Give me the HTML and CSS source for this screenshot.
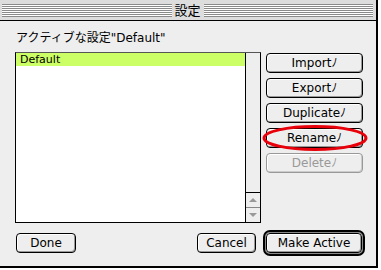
FILE: index.html
```html
<!DOCTYPE html>
<html lang="ja">
<head>
  <meta charset="UTF-8">
  <title>設定</title>
  <link rel="stylesheet" href="styles.css">
</head>
<body>
  <div class="window">
    <div class="titlebar">
      <div class="stripes"></div>
      <span class="title">設定</span>
      <div class="stripes"></div>
    </div>

    <div class="content">
      <div class="label">アクティブな設定"Default"</div>

      <div class="main">
        <div class="list">
          <div class="items">
            <div class="item selected">Default</div>
          </div>
          <div class="scrollbar">
            <div class="track"></div>
            <div class="arrow up"><span></span></div>
            <div class="arrow down"><span></span></div>
          </div>
        </div>

        <div class="actions">
          <button class="btn">Importﾉ</button>
          <button class="btn">Exportﾉ</button>
          <button class="btn">Duplicateﾉ</button>
          <div class="marked">
            <button class="btn">Renameﾉ</button>
            <svg class="circle" width="110" height="28" viewBox="0 0 110 28">
              <ellipse cx="54" cy="14" rx="51" ry="11.5" fill="none" stroke="#e8000b" stroke-width="3"/>
            </svg>
          </div>
          <button class="btn" disabled>Deleteﾉ</button>
        </div>
      </div>

      <div class="footer">
        <button class="btn done">Done</button>
        <button class="btn cancel">Cancel</button>
        <div class="default-ring">
          <button class="btn make">Make Active</button>
        </div>
      </div>
    </div>
  </div>
</body>
</html>
```

FILE: styles.css
```css
body {
  margin: 0;
  background: #fff;
  font-family: "DejaVu Sans", "Noto Sans CJK JP", sans-serif;
  font-size: 12px;
  color: #000;
}

.window {
  width: 376px;
  height: 266px;
  background: #eeeeee;
  border-right: 2px solid #000;
  border-bottom: 2px solid #000;
}

.titlebar {
  display: flex;
  align-items: center;
  height: 20px;
  padding: 0 3px 0 2px;
  background: #dddddd;
  border-bottom: 1px solid #000;
}

.stripes {
  flex: 1;
  height: 13px;
  margin-top: 1px;
  background: repeating-linear-gradient(to bottom, #8a8a8a 0 1px, #fff 1px 2px);
}

.title {
  padding: 0 3px;
  font-family: "Noto Sans CJK JP", sans-serif;
  font-size: 13px;
  line-height: 20px;
}

.content {
  padding: 10px 0 0 15px;
}

.label {
  font-size: 12px;
  line-height: 14px;
  margin-bottom: 7px;
  padding-left: 1px;
}

.main {
  display: flex;
}

.list {
  display: flex;
  width: 244px;
  height: 169px;
  border: 1px solid #000;
  border-top-color: #555;
  background: #fff;
}

.items {
  flex: 1;
}

.item {
  height: 13px;
  padding-left: 4px;
  font-size: 11px;
  line-height: 13px;
}

.item.selected {
  background: #ccff66;
}

.scrollbar {
  width: 14px;
  display: flex;
  flex-direction: column;
  border-left: 1px solid #000;
  background: #eeeeee;
}

.track {
  flex: 1;
}

.arrow {
  height: 14px;
  display: flex;
  align-items: center;
  justify-content: center;
  border-top: 1px solid #888;
}

.arrow.up {
  border-top-color: #000;
}

.arrow span {
  width: 0;
  height: 0;
  border-left: 4px solid transparent;
  border-right: 4px solid transparent;
}

.arrow.up span {
  border-bottom: 4px solid #999;
}

.arrow.down span {
  border-top: 4px solid #999;
}

.actions {
  display: flex;
  flex-direction: column;
  gap: 5px;
  margin-left: 5px;
  padding-top: 1px;
  width: 97px;
}

.btn {
  display: block;
  height: 20px;
  padding: 0;
  border: 1px solid #000;
  border-radius: 4px;
  background: #eeeeee;
  box-shadow: inset 1px 1px 0 #fff, inset -1px -1px 0 #999;
  font-family: "DejaVu Sans", "Noto Sans CJK JP", sans-serif;
  font-size: 12px;
  line-height: 18px;
  color: #000;
  text-align: center;
}

.actions .btn {
  width: 97px;
}

.btn:disabled {
  border-color: #999;
  color: #999;
  box-shadow: inset 1px 1px 0 #fff, inset -1px -1px 0 #ccc;
}

.marked {
  position: relative;
}

.circle {
  position: absolute;
  left: -5px;
  top: -4px;
}

.footer {
  display: flex;
  align-items: center;
  width: 349px;
  margin-top: 7px;
  padding-left: 1px;
}

.done {
  width: 60px;
}

.cancel {
  width: 59px;
  margin-left: auto;
  margin-right: 7px;
}

.default-ring {
  padding: 1px;
  border: 2px solid #000;
  border-radius: 7px;
  box-shadow: inset 0 0 0 1px #888;
  background: #eeeeee;
}

.make {
  width: 96px;
}
```
